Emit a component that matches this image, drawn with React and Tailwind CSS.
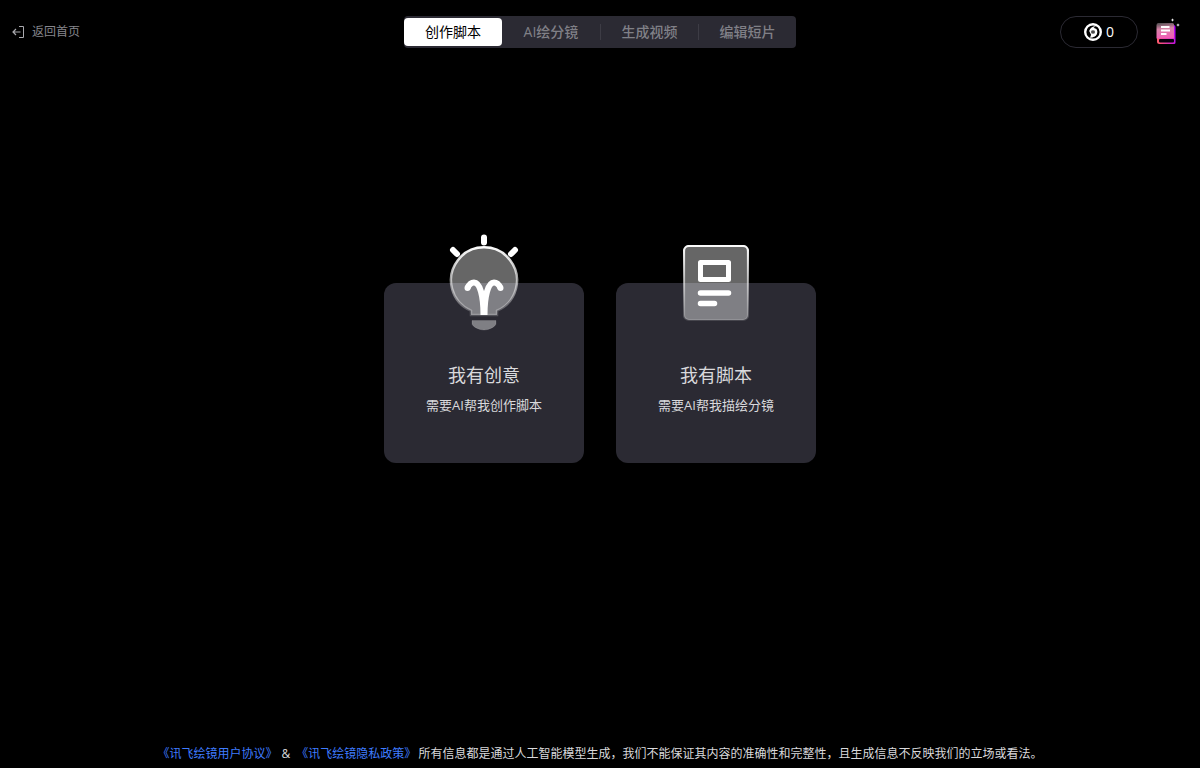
import React from "react";

const steps = ["创作脚本", "AI绘分镜", "生成视频", "编辑短片"];

function BackIcon() {
  return (
    <svg width="14" height="14" viewBox="0 0 14 14" fill="none" stroke="currentColor" aria-hidden="true">
      <path d="M7 1.500h4.500v11H7" />
      <path d="M1 7h7.500M4 4L1 7l3 3" strokeWidth="1.200" />
    </svg>
  );
}

function CoinIcon() {
  return (
    <svg width="18" height="18" viewBox="0 0 18 18" fill="none" aria-hidden="true">
      <circle cx="9" cy="9" r="7.800" stroke="#fff" strokeWidth="2.400" />
      <path d="M12 3.200C8.500 3.200 6 5 5.200 8l2 4 3.500 1.500c2-1.200 2.800-3 2.600-5.500L12.500 6 9.500 4.800z" fill="#fff" />
      <path d="M6 14.800c3.500 0 6-1.800 6.800-4.800l-3 .5L7 12z" fill="#fff" />
      <circle cx="9" cy="9" r="2.100" fill="#777" />
      <path d="M7.500 9h3" stroke="#222" />
    </svg>
  );
}

function BookIcon() {
  return (
    <svg width="24" height="28" viewBox="0 0 24 28" fill="none" aria-hidden="true">
      <defs>
        <linearGradient id="book-cover" x1="1" y1="20" x2="20" y2="14" gradientUnits="userSpaceOnUse">
          <stop stopColor="#ff5a6e" />
          <stop offset="1" stopColor="#b400ff" />
        </linearGradient>
        <linearGradient id="book-page" x1="8" y1="5" x2="10" y2="21" gradientUnits="userSpaceOnUse">
          <stop stopColor="#5d5458" />
          <stop offset=".35" stopColor="#d884a8" />
          <stop offset="1" stopColor="#f45ab8" />
        </linearGradient>
      </defs>
      <path d="M3 7h14.500a2 2 0 0 1 2 2v15.500a1.500 1.500 0 0 1-1.500 1.500H3.500A2.500 2.500 0 0 1 1 23.500V9a2 2 0 0 1 2-2z" fill="url(#book-cover)" />
      <path d="M2.500 5h14a1.500 1.500 0 0 1 1.500 1.500v14H.500V7a2 2 0 0 1 2-2z" fill="url(#book-page)" />
      <rect x="3" y="21" width="15" height="3.500" rx="1" fill="#08000c" />
      <path d="M5 9h8.500M5 12.500h9M5 16h5.500" stroke="#fff" strokeWidth="1.800" />
      <path d="M16.500 .2l.5 1.300 1.300.5-1.300.5-.5 1.300-.5-1.300-1.300-.5 1.300-.5zM22 5.200l.5 1.300 1.300.5-1.300.5-.5 1.300-.5-1.300-1.300-.5 1.300-.5z" fill="#fff" />
    </svg>
  );
}

function BulbIcon() {
  return (
    <svg width="72" height="98" viewBox="0 1 72 98" fill="none" aria-hidden="true">
      <defs>
        <linearGradient id="bulb-edge" x1="36" y1="13" x2="36" y2="83" gradientUnits="userSpaceOnUse">
          <stop stopColor="#fff" />
          <stop offset="1" stopColor="#fff" stopOpacity=".18" />
        </linearGradient>
      </defs>
      <path d="M23 82v-4.300a33 33 0 1 1 26 0v4.300z" fill="#fff" fillOpacity=".4" stroke="url(#bulb-edge)" strokeWidth="2.500" />
      <path d="M24 87.500h24v3c0 3-7 6.500-12 6.500s-12-3.500-12-6.500z" fill="#fff" fillOpacity=".4" stroke="#fff" strokeOpacity=".12" />
      <path d="M36 4.500v5M5 17l4 4M67 17l-4 4" stroke="#fff" strokeWidth="6" strokeLinecap="round" />
      <path d="M19.500 55Q22 49.500 26 49.500C32 49.500 35.500 63 35.500 82M52.500 55Q50 49.500 46 49.500C40 49.500 36.500 63 36.500 82" stroke="#fff" strokeWidth="6" />
      <path d="M19.500 55v.01M52.500 55v.01" stroke="#fff" strokeWidth="6" strokeLinecap="round" />
    </svg>
  );
}

function ScriptIcon() {
  return (
    <svg width="66" height="77" viewBox="0 0.500 66 77" fill="none" aria-hidden="true">
      <defs>
        <linearGradient id="script-edge" x1="33" y1="0" x2="33" y2="77" gradientUnits="userSpaceOnUse">
          <stop stopColor="#fff" />
          <stop offset="1" stopColor="#fff" stopOpacity=".12" />
        </linearGradient>
      </defs>
      <rect x="1" y="1.500" width="64" height="74" rx="5" fill="#fff" fillOpacity=".4" stroke="url(#script-edge)" strokeWidth="2.200" />
      <rect x="17.500" y="18" width="28" height="17" stroke="#fff" strokeWidth="5" strokeLinejoin="round" />
      <path d="M17.500 48.500h28M17.500 59h14" stroke="#fff" strokeWidth="5.500" strokeLinecap="round" />
    </svg>
  );
}

function ChoiceCard({ icon, title, note }) {
  return (
    <button type="button" className="relative flex h-45 w-50 flex-col items-center rounded-xl bg-[#2b2a33] pt-20 text-[#d9d9dc]">
      <span className="absolute inset-x-0 -top-12 flex h-24 items-center justify-center">{icon}</span>
      <span className="text-lg leading-6">{title}</span>
      <span className="mt-2 text-[13px] leading-5">{note}</span>
    </button>
  );
}

export default function App() {
  return (
    <div className="flex min-h-screen flex-col bg-black font-['Open_Sans','Noto_Sans_CJK_SC',sans-serif] text-white" lang="zh-CN">
      <header className="grid h-16 grid-cols-[1fr_auto_1fr] items-center px-3">
        <a href="#home" className="flex items-center gap-1.5 justify-self-start text-xs text-[#86868c]">
          <span className="text-[#a9a9ae]"><BackIcon /></span>
          返回首页
        </a>
        <nav className="flex h-8 items-center rounded-sm bg-[#2b2a33]">
          {steps.map((step, i) => (
            <button
              key={step}
              type="button"
              aria-current={i === 0 ? "step" : undefined}
              className={
                i === 0
                  ? "h-7 w-[98px] rounded-sm bg-white text-sm text-black"
                  : i === 1
                    ? "h-4 w-[98px] text-sm leading-4 font-medium text-[#808087]"
                    : "h-4 w-[98px] border-l border-[#3d3c45] text-sm leading-4 font-medium text-[#808087]"
              }
            >
              {step}
            </button>
          ))}
        </nav>
        <div className="flex items-center justify-self-end pr-1.5">
          <button type="button" aria-label="积分 0" className="flex h-8 w-[78px] items-center justify-center gap-1 rounded-full border border-[#2b2a33] text-sm font-medium">
            <CoinIcon />
            <span>0</span>
          </button>
          <button type="button" aria-label="使用手册" className="ml-4 px-0.5">
            <BookIcon />
          </button>
        </div>
      </header>

      <main className="flex flex-1 items-center justify-center gap-8 pb-[62px]">
        <ChoiceCard icon={<BulbIcon />} title="我有创意" note="需要AI帮我创作脚本" />
        <ChoiceCard icon={<ScriptIcon />} title="我有脚本" note="需要AI帮我描绘分镜" />
      </main>

      <footer className="flex flex-wrap items-center justify-center pb-1 text-xs leading-5 text-[#d9d9dc]">
        <a href="#terms" className="text-[#3f7cff]">《讯飞绘镜用户协议》</a>
        <span className="pr-1.5 pl-1">&amp;</span>
        <a href="#privacy" className="mr-0.5 text-[#3f7cff]">《讯飞绘镜隐私政策》</a>
        <span>所有信息都是通过人工智能模型生成，我们不能保证其内容的准确性和完整性，且生成信息不反映我们的立场或看法。</span>
      </footer>
    </div>
  );
}
